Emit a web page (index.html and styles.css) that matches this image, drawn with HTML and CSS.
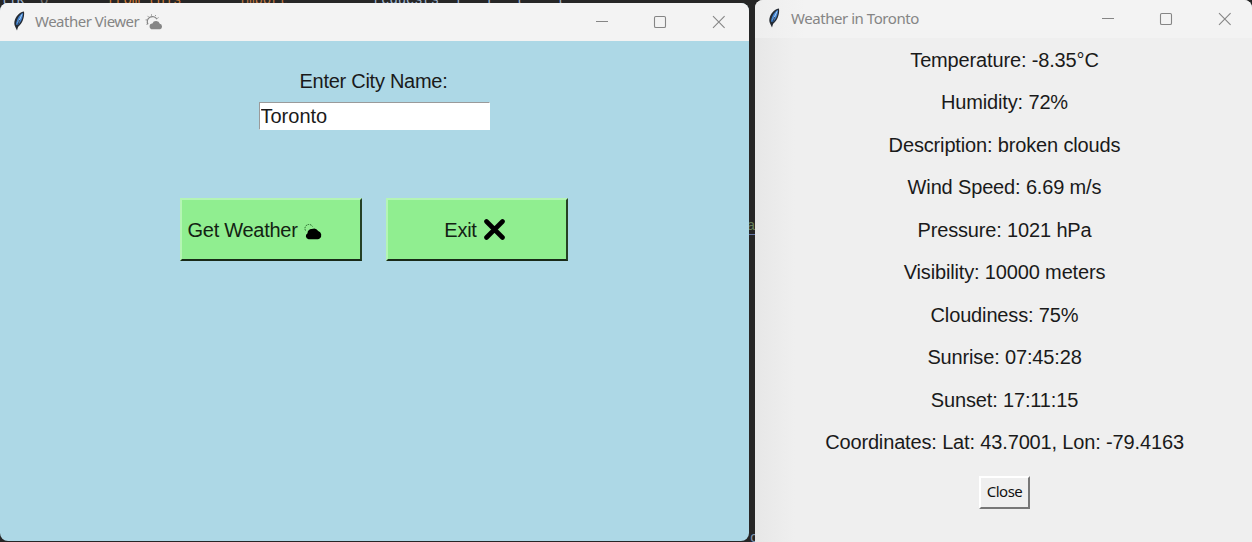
FILE: index.html
```
<!DOCTYPE html>
<html lang="en">
<head>
<meta charset="utf-8">
<title>Weather Viewer</title>
<link rel="stylesheet" href="styles.css">
</head>
<body>
<svg class="defs" width="0" height="0">
  <symbol id="feather" viewBox="0 0 12 20">
    <path d="M11 .5C7.500 .8 3.600 4.200 2 8.500c-1 2.900-.9 5 .1 6.900L4 19.500l1-3.500C9.200 12.500 11.800 6.500 11 .5z" fill="#252b33"/>
    <path d="M9.900 1.800C6.800 3.400 3.700 8 3 13.300l1.400 1.300C7.800 11.800 10.200 6.800 9.900 1.800z" fill="#4384d2"/>
    <path d="M9 3.400 5 12" stroke="#a5cdf3" stroke-width="1"/>
    <path d="m6.500 9-2.700 8" stroke="#1c232c" stroke-width=".8"/>
  </symbol>
  <symbol id="controls" viewBox="0 0 130 14">
    <g fill="none" stroke="#858585" stroke-width="1.100">
      <path d="M1 6.500h12"/>
      <rect x="59.500" y="1.500" width="11" height="11" rx="1.300"/>
      <path d="m118 1.200 11.600 11.600m0-11.600L118 12.800"/>
    </g>
  </symbol>
</svg>
<div class="editor top"><span class="frag f1">llR</span><span class="frag f2">Q</span><span class="frag f3">from this</span><span class="frag f4">import</span><span class="frag f5">requests</span><span class="frag f7">f</span><span class="frag f8">T</span><span class="frag f9">l</span><span class="frag f10">l</span></div>
<div class="peek a">a</div>
<div class="peek c">c</div>
<main class="desktop">
  <section class="window viewer">
    <header class="titlebar">
      <svg class="feather"><use href="#feather"/></svg>
      <span class="title">Weather Viewer</span>
      <svg class="sun" viewBox="0 0 18 16"><path d="M3 10.400a5 5 0 1 1 8.900-5.300" fill="none" stroke="#858585" stroke-width="1.200"/><path d="M6.500 .4v1.200M10.700 1.200l-.6 1M2.600 1.900l.8.900M.6 5.900h1.300M1.500 10.400l1-.6M13.500 3.600l-1.100.7" stroke="#858585"/><path d="M7.600 15.200a2.900 2.900 0 0 1-.2-5.800 3.900 3.900 0 0 1 7.400.4 2.800 2.800 0 0 1 .3 5.400z" fill="#858585"/></svg>
      <svg class="controls"><use href="#controls"/></svg>
    </header>
    <div class="form">
      <label class="label" for="city">Enter City Name:</label>
      <input class="city" id="city" value="Toronto">
      <div class="actions">
        <button class="action get">Get Weather <svg class="cloud" viewBox="0 0 18 16"><path d="M1.500 6.500a3.900 3.900 0 0 1 7-4" fill="none" stroke="#27652b" stroke-width="1" stroke-dasharray="1.500 .8"/><path d="M4.500 15.300a3.300 3.300 0 0 1-1-6.100 4 4 0 0 1 4.200-4.100 5 5 0 0 1 6.500 1.800 4.500 4.500 0 0 1 1.500 7.700q-.7.700-2 .7z"/></svg></button>
        <button class="action">Exit <svg class="cross" viewBox="0 0 21 21"><path d="m2.500 2.500 16 16m0-16-16 16" stroke="#000" stroke-width="4.600" stroke-linecap="round"/></svg></button>
      </div>
    </div>
  </section>
  <section class="window report">
    <header class="titlebar">
      <svg class="feather"><use href="#feather"/></svg>
      <span class="title">Weather in Toronto</span>
      <svg class="controls"><use href="#controls"/></svg>
    </header>
    <div class="readings">
      <p>Temperature: -8.35°C</p>
      <p>Humidity: 72%</p>
      <p>Description: broken clouds</p>
      <p>Wind Speed: 6.69 m/s</p>
      <p>Pressure: 1021 hPa</p>
      <p>Visibility: 10000 meters</p>
      <p>Cloudiness: 75%</p>
      <p>Sunrise: 07:45:28</p>
      <p>Sunset: 17:11:15</p>
      <p>Coordinates: Lat: 43.7001, Lon: -79.4163</p>
      <button class="close">Close</button>
    </div>
  </section>
</main>
</body>
</html>
```
FILE: styles.css
```
* { box-sizing: border-box; }
body {
  margin: 0;
  width: 1252px;
  height: 542px;
  overflow: hidden;
  position: relative;
  background: #262626;
  font: 20px/24px "Liberation Sans", Arial, sans-serif;
  letter-spacing: -0.15px;
  color: #1a1a1a;
}
.defs { position: absolute; }
.editor {
  position: absolute;
  top: 0;
  left: 0;
  width: 755px;
  height: 8px;
  overflow: hidden;
  font: 14px/14px "Liberation Mono", monospace;
  color: #9eb4d0;
}
.frag { position: absolute; top: -7px; white-space: pre; }
.f1 { left: 0; }
.f2 { left: 40px; color: #777; }
.f3 { left: 107px; color: #d27b36; }
.f4 { left: 238px; color: #bd7740; }
.f5 { left: 373px; }
.f7 { left: 455px; }
.f8 { left: 485px; }
.f9 { left: 515px; }
.f10 { left: 556px; }
.peek {
  position: absolute;
  left: 747px;
  font: 14px/16px "Liberation Mono", monospace;
}
.peek.a { top: 218px; color: #69805a; border-bottom: 1px solid #6577a8; }
.peek.c { top: 530px; left: 750px; color: #8194ad; }
.desktop {
  position: relative;
  display: flex;
  gap: 6px;
  height: 542px;
}
.window { overflow: hidden; }
.viewer {
  width: 749px;
  height: 538px;
  margin-top: 3px;
  border-radius: 8px;
  background: #add8e6;
}
.report {
  width: 497px;
  height: 550px;
  border-radius: 8px 8px 0 0;
  background: linear-gradient(90deg, #e7e7e7, #efefef 40px);
}
.titlebar {
  display: flex;
  align-items: center;
  height: 38px;
  padding: 0 24px 0 13px;
  background: #f3f3f3;
}
.report .titlebar {
  padding-right: 21px;
  background: linear-gradient(90deg, #eeeeee, #f3f3f3 50px);
}
.feather { width: 12px; height: 20px; margin-top: -2px; }
.title {
  margin: -2px 0 0 10px;
  font: 15px/20px "Noto Sans", sans-serif;
  letter-spacing: -0.5px;
  color: #858585;
}
.report .title { margin-left: 11px; letter-spacing: -0.45px; }
.sun { width: 18px; height: 16px; margin-left: 6px; }
.controls { width: 130px; height: 14px; margin-left: auto; }
.form {
  display: flex;
  flex-direction: column;
  align-items: center;
  padding-right: 2px;
}
.label { margin-top: 28px; letter-spacing: -0.27px; }
.city {
  width: 231px;
  height: 28px;
  margin: 9px 0 0 1px;
  padding: 1px 0 0 1px;
  border: 1px solid #fff;
  border-top-color: #9a9a9a;
  border-left-color: #9a9a9a;
  background: #fff;
  font: inherit;
  letter-spacing: 0;
  color: #1a1a1a;
}
.actions {
  display: flex;
  gap: 24px;
  margin-top: 68px;
}
.action {
  display: flex;
  align-items: center;
  justify-content: center;
  gap: 7px;
  width: 182px;
  height: 63px;
  padding: 0 4px 0 0;
  border: 2px solid;
  border-color: #b4f5b4 #254025 #182a18 #b4f5b4;
  background: #90ee90;
  font: inherit;
  letter-spacing: -0.27px;
  color: #132213;
}
.get { justify-content: flex-start; padding-left: 6px; gap: 6px; }
.cloud { width: 18px; height: 16px; margin-top: 4px; }
.cross { width: 21px; height: 21px; }
.readings {
  display: flex;
  flex-direction: column;
  align-items: center;
  padding: 9.5px 0 0 2px;
}
.readings p { margin: 0 0 18.55px; }
.close {
  width: 51px;
  height: 33px;
  margin-top: 3px;
  padding: 0 0 2px;
  border: 2px solid;
  border-color: #fff #777 #777 #fff;
  background: #efefef;
  font: 15px/18px "Noto Sans", sans-serif;
  letter-spacing: -0.5px;
  color: #111;
}
```
